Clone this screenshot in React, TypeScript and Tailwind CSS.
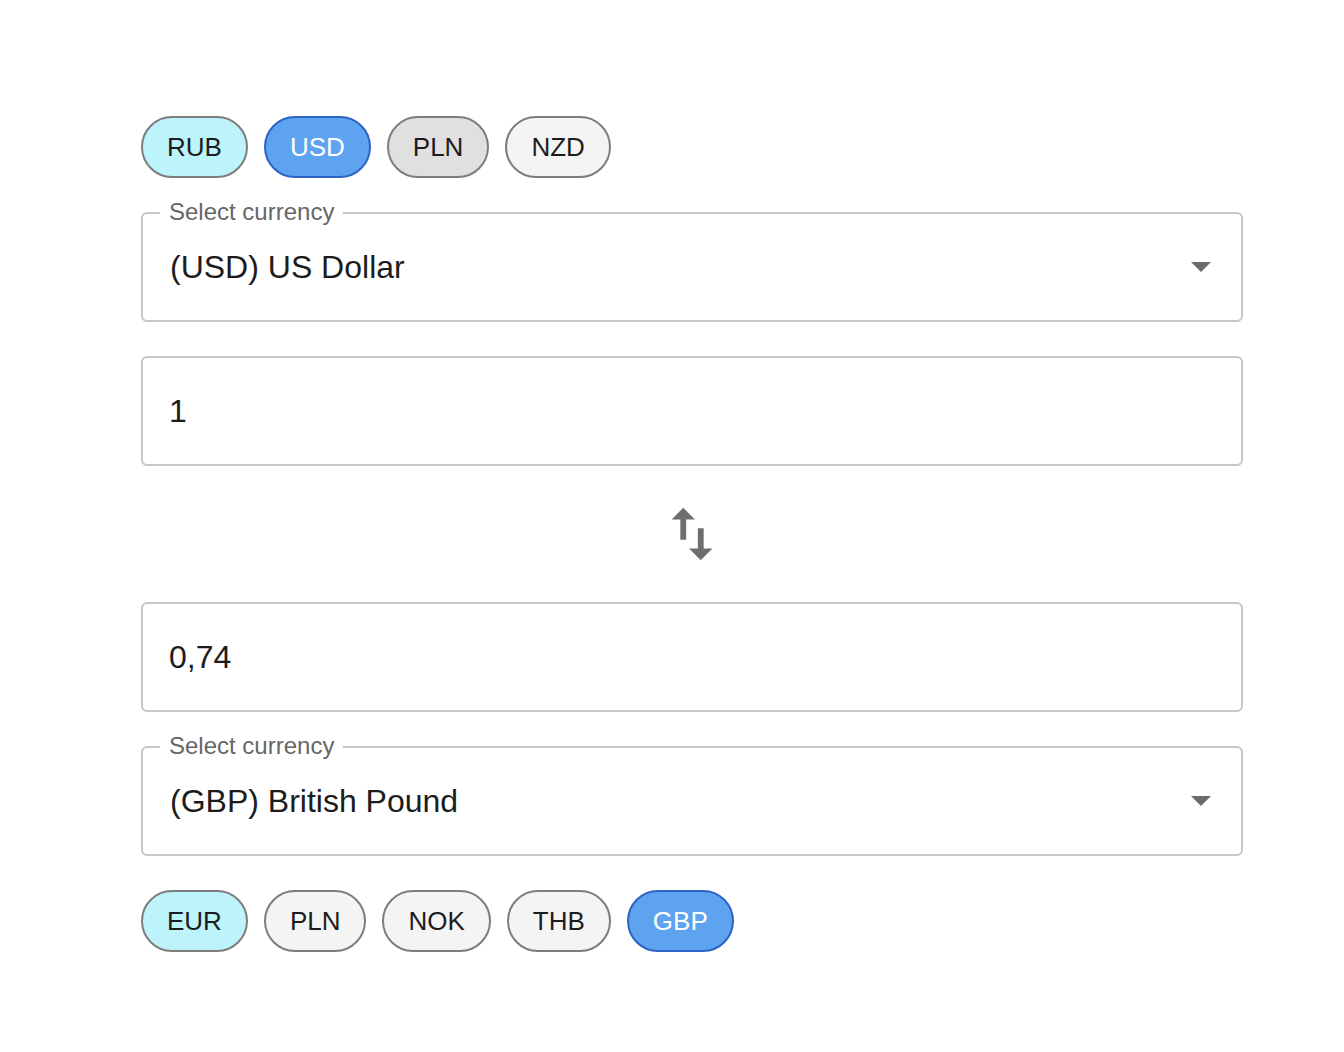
import { useState } from "react";

type Chip = { code: string; tone: "cyan" | "blue" | "gray" | "light" };

const topChips: Chip[] = [
  { code: "RUB", tone: "cyan" },
  { code: "USD", tone: "blue" },
  { code: "PLN", tone: "gray" },
  { code: "NZD", tone: "light" },
];

const bottomChips: Chip[] = [
  { code: "EUR", tone: "cyan" },
  { code: "PLN", tone: "light" },
  { code: "NOK", tone: "light" },
  { code: "THB", tone: "light" },
  { code: "GBP", tone: "blue" },
];

const toneClass = {
  cyan: "bg-[#bdf3fb] border-[#7d7d7d] text-[#1c1c1c]",
  blue: "bg-[#5ea3ef] border-[#2c63c4] text-white",
  gray: "bg-[#e0e0e0] border-[#7d7d7d] text-[#1c1c1c]",
  light: "bg-[#f4f4f4] border-[#7d7d7d] text-[#1c1c1c]",
};

const ChipRow = ({ chips }: { chips: Chip[] }) => (
  <div className="flex gap-[16px]">
    {chips.map((c) => (
      <button
        key={c.code}
        className={`h-[62px] px-[24px] rounded-full border-2 text-[26px] leading-none ${toneClass[c.tone]}`}
      >
        {c.code}
      </button>
    ))}
  </div>
);

const CurrencySelect = ({ value }: { value: string }) => (
  <div className="relative h-[110px] rounded-md border-2 border-[#c6c6c6] flex items-center pl-[27px] pr-[30px]">
    <span className="absolute -top-[18px] left-[17px] bg-white px-[9px] text-[24px] leading-[32px] text-[#666666]">
      Select currency
    </span>
    <span className="flex-1 text-[32px] text-[#1c1c1c]">{value}</span>
    <svg width="20" height="10" viewBox="0 0 20 10" className="fill-[#6b6b6b]">
      <path d="M0 0l10 10 10-10z" />
    </svg>
  </div>
);

const AmountInput = ({ value }: { value: string }) => {
  const [v, setV] = useState(value);
  return (
    <input
      value={v}
      onChange={(e) => setV(e.target.value)}
      className="h-[110px] w-full rounded-md border-2 border-[#c6c6c6] px-[26px] text-[32px] text-[#1c1c1c] outline-none"
    />
  );
};

export default function App() {
  return (
    <div className="min-h-screen bg-white font-['Liberation_Sans',Arial,sans-serif]">
      <div className="w-[1102px] ml-[141px] pt-[116px] flex flex-col">
        <ChipRow chips={topChips} />
        <div className="mt-[34px]">
          <CurrencySelect value="(USD) US Dollar" />
        </div>
        <div className="mt-[34px]">
          <AmountInput value="1" />
        </div>
        <div className="h-[136px] flex items-center justify-center">
          <svg width="70" height="70" viewBox="0 0 24 24" className="fill-[#6e6e6e]">
            <path d="M16 17.01V10h-2v7.01h-3L15 21l4-3.99h-3zM9 3 5 6.99h3V14h2V6.99h3L9 3z" />
          </svg>
        </div>
        <AmountInput value="0,74" />
        <div className="mt-[34px]">
          <CurrencySelect value="(GBP) British Pound" />
        </div>
        <div className="mt-[34px]">
          <ChipRow chips={bottomChips} />
        </div>
      </div>
    </div>
  );
}
